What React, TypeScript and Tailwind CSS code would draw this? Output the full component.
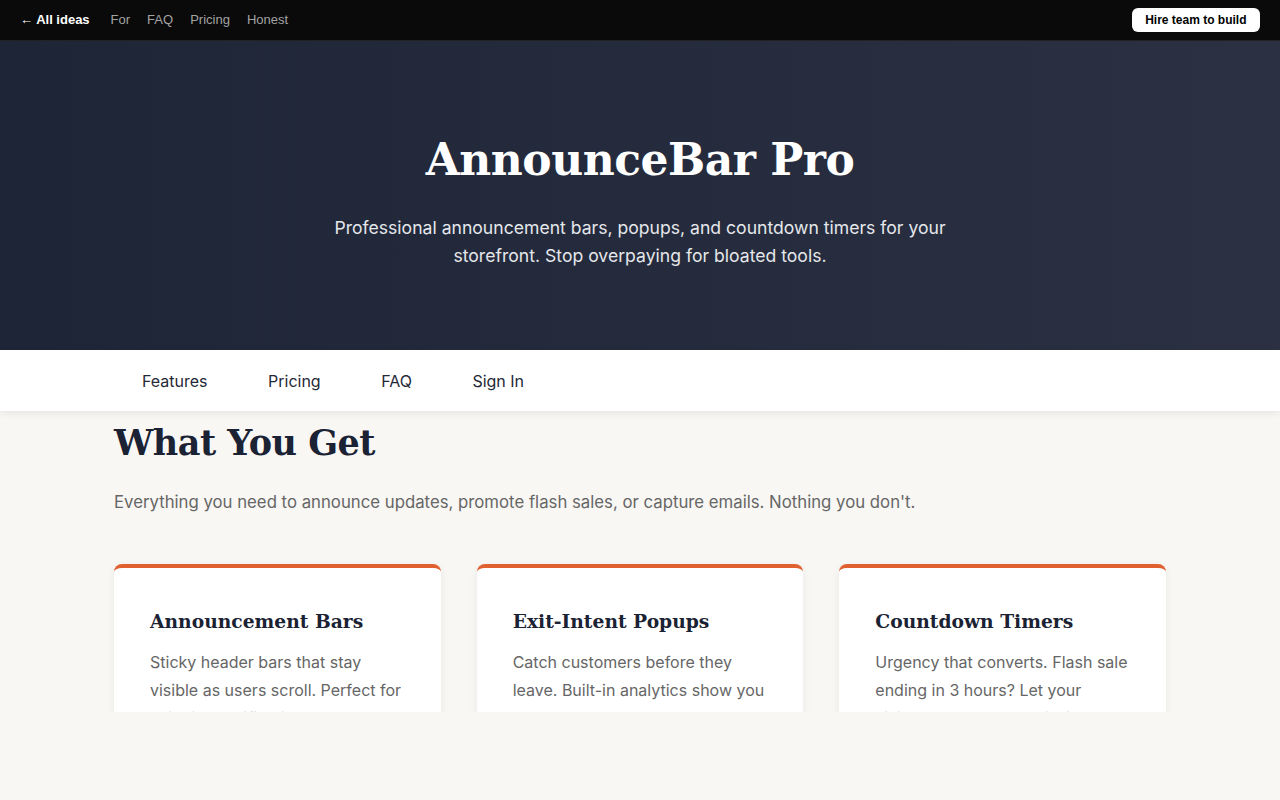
import React from "react";

const serif = "font-['DejaVu_Serif',serif]";

const Features = () => {
  const cards = [
    {
      title: "Announcement Bars",
      body: "Sticky header bars that stay visible as users scroll. Perfect for shipping notifications, events, or sales.",
    },
    {
      title: "Exit-Intent Popups",
      body: "Catch customers before they leave. Built-in analytics show you exactly when they're about to bounce.",
    },
    {
      title: "Countdown Timers",
      body: "Urgency that converts. Flash sale ending in 3 hours? Let your visitors see the clock ticking down.",
    },
  ];
  return (
    <section className="bg-[#f8f7f4]">
      <div className="mx-auto max-w-[1100px] px-6 pt-2 pb-20">
        <h2 className={`${serif} text-[35px] leading-[48px] font-bold text-[#1a2233] tracking-[-0.5px]`}>What You Get</h2>
        <p className="mt-[21px] text-[16.75px] leading-[28px] text-[#666]">
          Everything you need to announce updates, promote flash sales, or capture emails. Nothing you don't.
        </p>
        <div className="mt-[48px] grid grid-cols-3 gap-[36px]">
          {cards.map((card, i) => (
            <div key={i} className="rounded-lg border-t-4 border-[#e0612f] bg-white px-9 pt-9 pb-10 shadow-[0_2px_10px_rgba(0,0,0,0.06)]">
              <h3 className={`${serif} text-[18.7px] leading-[34px] font-bold text-[#1a2233]`}>{card.title}</h3>
              <p className="mt-[10px] text-[16px] leading-[28px] text-[#666]">{card.body}</p>
            </div>
          ))}
        </div>
      </div>
    </section>
  );
};

export default function App() {
  return (
    <div className="min-h-[800px] bg-[#f8f7f4] font-['Inter',sans-serif]">
      <header className="flex h-[41px] items-center justify-between border-b border-[#222] bg-[#0a0a0a] pl-[20px] pr-[20px] font-['Liberation_Sans',Arial,sans-serif] text-[13px]">
        <nav className="flex items-center gap-[17px]">
          <a className="mr-[4px] font-bold text-white">← All ideas</a>
          <a className="text-[#a3a3a3]">For</a>
          <a className="text-[#a3a3a3]">FAQ</a>
          <a className="text-[#a3a3a3]">Pricing</a>
          <a className="text-[#a3a3a3]">Honest</a>
        </nav>
        <button className="h-[24px] rounded-md bg-white px-[13.5px] text-[12px] font-bold text-black">Hire team to build</button>
      </header>

      <div className="h-[671px] overflow-hidden">
        <section className="h-[309px] bg-gradient-to-r from-[#1e2537] to-[#2b3142] pt-[90px] text-center">
          <h1 className={`${serif} text-[44px] leading-[58px] font-bold text-white tracking-[-0.5px]`}>AnnounceBar Pro</h1>
          <p className="mx-auto mt-[25px] max-w-[640px] text-[17.6px] leading-[28px] text-[#e5e7eb]">
            Professional announcement bars, popups, and countdown timers for your storefront. Stop overpaying for bloated tools.
          </p>
        </section>

        <nav className="relative z-10 h-[61px] bg-white shadow-[0_2px_8px_rgba(0,0,0,0.08)]">
          <div className="mx-auto flex h-full max-w-[1100px] items-center gap-[60.5px] px-6 pl-[52px] text-[16px] text-[#1f2937]">
            <a>Features</a>
            <a>Pricing</a>
            <a>FAQ</a>
            <a>Sign In</a>
          </div>
        </nav>

        <Features />
      </div>
    </div>
  );
}
